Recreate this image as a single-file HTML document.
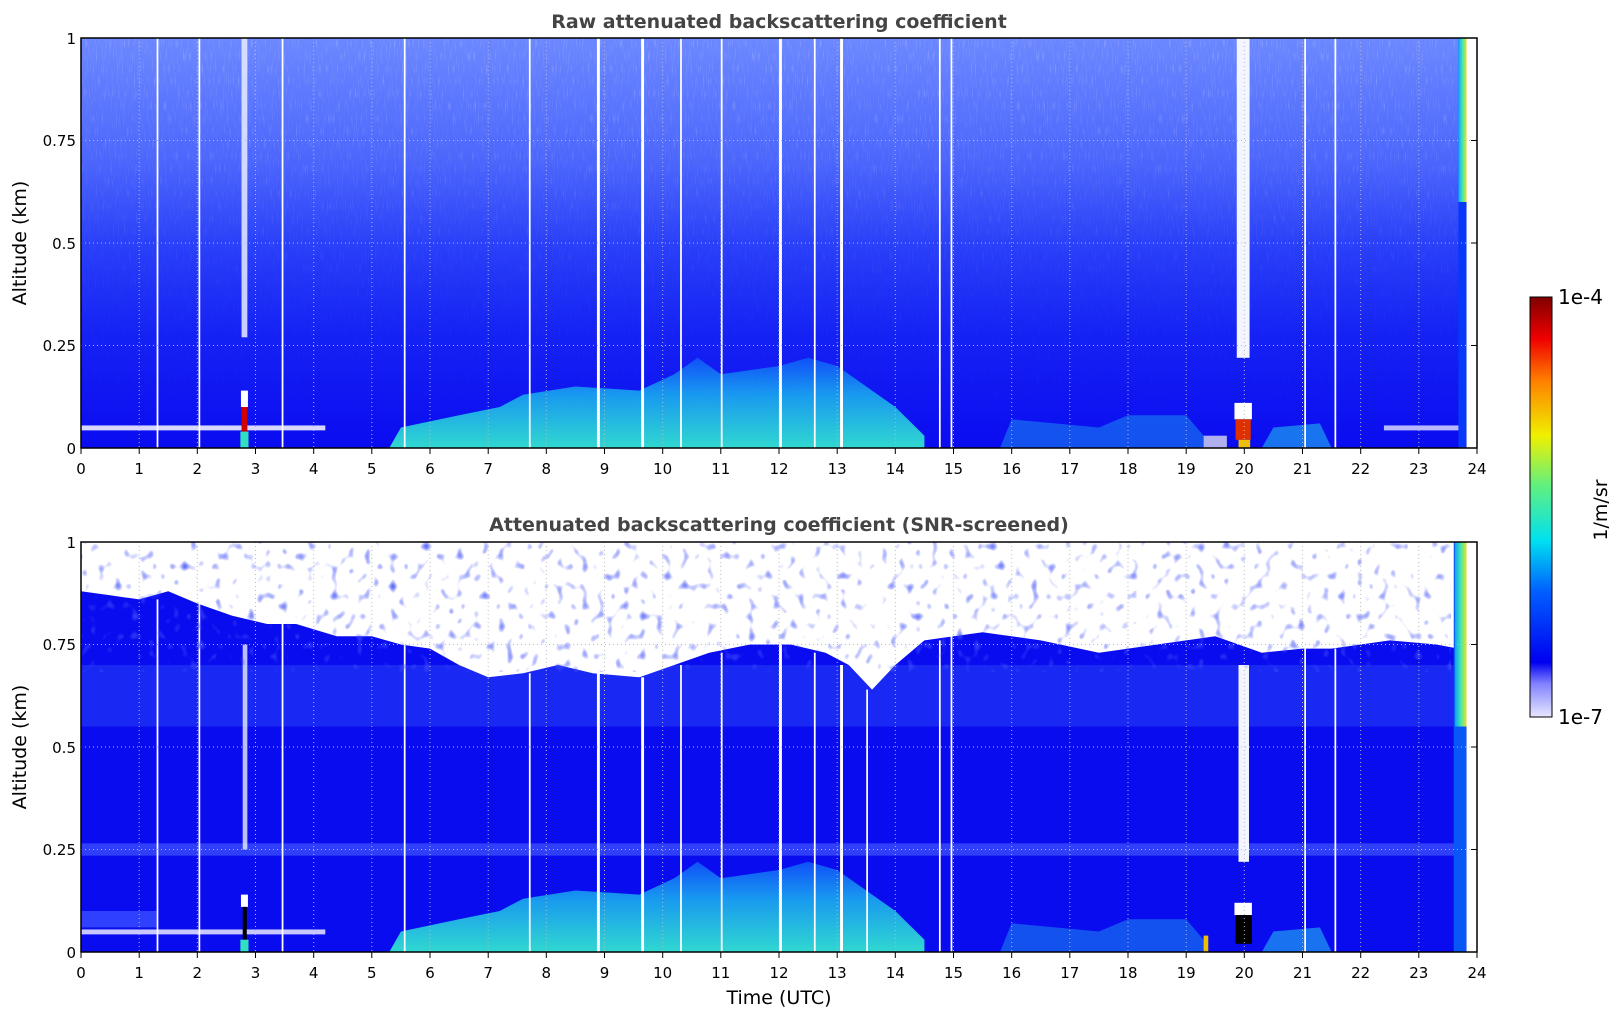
<!DOCTYPE html>
<html><head><meta charset="utf-8"><style>
body{margin:0;background:#fff;width:1621px;height:1020px;overflow:hidden;font-family:"DejaVu Sans","Liberation Sans",sans-serif;}
</style></head><body>
<svg width="1621" height="1020" xmlns="http://www.w3.org/2000/svg" font-family="DejaVu Sans, Liberation Sans, sans-serif">
<defs>
<linearGradient id="gTop" x1="0" y1="0" x2="0" y2="1">
<stop offset="0" stop-color="#6c88ff"/><stop offset="0.3" stop-color="#4c66fc"/><stop offset="0.5" stop-color="#2a40f8"/><stop offset="0.72" stop-color="#1522f4"/><stop offset="1" stop-color="#0a0cf0"/>
</linearGradient>
<linearGradient id="aer" x1="0" y1="0" x2="0" y2="1">
<stop offset="0" stop-color="#1050f8"/><stop offset="0.4" stop-color="#1898f0"/><stop offset="1" stop-color="#30d8d0"/>
</linearGradient>
<linearGradient id="strip" x1="0" y1="0" x2="1" y2="0">
<stop offset="0" stop-color="#10a0f8"/><stop offset="0.5" stop-color="#40e8b0"/><stop offset="1" stop-color="#f0e020"/>
</linearGradient>
<linearGradient id="cb" x1="0" y1="1" x2="0" y2="0">
<stop offset="0" stop-color="#e8e8ff"/><stop offset="0.08" stop-color="#8080ff"/><stop offset="0.13" stop-color="#0000f0"/><stop offset="0.3" stop-color="#0060ff"/><stop offset="0.42" stop-color="#00e0f0"/><stop offset="0.55" stop-color="#60f080"/><stop offset="0.67" stop-color="#f0f000"/><stop offset="0.8" stop-color="#ff8000"/><stop offset="0.9" stop-color="#f00000"/><stop offset="1" stop-color="#800000"/>
</linearGradient>
<filter id="nz" x="0" y="0" width="1" height="1"><feTurbulence type="fractalNoise" baseFrequency="0.9 0.08" numOctaves="1" seed="3"/><feColorMatrix type="matrix" values="0 0 0 0 1  0 0 0 0 1  0 0 0 0 1  0 0 0 1.6 -0.9"/></filter>
<filter id="nzb" x="0" y="0" width="1" height="1"><feTurbulence type="fractalNoise" baseFrequency="0.12 0.1" numOctaves="1" seed="7"/><feColorMatrix type="matrix" values="0 0 0 0 0.05  0 0 0 0 0.08  0 0 0 0 0.95  0 0 0 4 -2.4"/></filter>
<linearGradient id="fade" x1="0" y1="0" x2="0" y2="1"><stop offset="0" stop-color="#fff" stop-opacity="1"/><stop offset="0.6" stop-color="#fff" stop-opacity="0.2"/><stop offset="1" stop-color="#fff" stop-opacity="0"/></linearGradient>
<mask id="fm"><rect x="0" y="0" width="1396" height="410" fill="url(#fade)"/></mask>
</defs>

<text x="779" y="28" font-size="19" font-weight="bold" fill="#444" text-anchor="middle">Raw attenuated backscattering coefficient</text>
<text x="779" y="531" font-size="19" font-weight="bold" fill="#444" text-anchor="middle">Attenuated backscattering coefficient (SNR-screened)</text>

<!-- TOP PANEL -->
<g transform="translate(81,38)">
<svg width="1396" height="410" viewBox="0 0 24 1" preserveAspectRatio="none">
<rect x="0" y="0" width="24" height="1" fill="url(#gTop)"/>
<polygon fill="url(#aer)" points="5.3,1 5.5,0.95 6.5,0.92 7.2,0.9 7.6,0.87 8.5,0.85 9.6,0.86 10.2,0.82 10.6,0.78 11,0.82 12,0.8 12.5,0.78 13,0.8 13.5,0.85 14,0.9 14.5,0.97 14.5,1"/>
<polygon fill="#1870f0" opacity="0.7" points="15.8,1 16,0.93 17.5,0.95 18,0.92 19,0.92 19.3,0.97 19.3,1"/>
<polygon fill="#20a0f0" opacity="0.7" points="20.3,1 20.5,0.95 21.3,0.94 21.5,1"/>
<rect x="0" y="0.945" width="4.2" height="0.012" fill="#d8d8ff"/>
<rect x="22.4" y="0.945" width="1.3" height="0.012" fill="#b8b8ff"/>
<rect x="19.3" y="0.97" width="0.4" height="0.03" fill="#b0b0f0"/>
<rect x="2.76" y="0" width="0.1" height="0.73" fill="#e8ecff" opacity="0.85"/>
<rect x="2.75" y="0.86" width="0.12" height="0.04" fill="#fff"/>
<rect x="2.76" y="0.9" width="0.1" height="0.06" fill="#d00000"/>
<rect x="2.74" y="0.96" width="0.14" height="0.04" fill="#30e0c0"/>
<rect x="19.87" y="0" width="0.22" height="0.78" fill="#f4f6ff"/>
<rect x="19.83" y="0.89" width="0.3" height="0.04" fill="#fff"/>
<rect x="19.85" y="0.93" width="0.26" height="0.05" fill="#e03000"/>
<rect x="19.9" y="0.98" width="0.2" height="0.02" fill="#f0c000"/>
<rect x="23.68" y="0" width="0.14" height="1" fill="#0838f8"/>
<rect x="23.68" y="0" width="0.14" height="0.4" fill="url(#strip)"/>
<rect x="23.82" y="0" width="0.18" height="1" fill="#fff"/>
<g fill="#fff">
<rect x="1.3" y="0" width="0.03" height="1"/><rect x="2.02" y="0" width="0.03" height="1"/><rect x="3.45" y="0" width="0.03" height="1"/><rect x="5.55" y="0" width="0.03" height="1"/><rect x="7.7" y="0" width="0.03" height="1"/><rect x="8.87" y="0" width="0.05" height="1"/><rect x="9.63" y="0" width="0.05" height="1"/><rect x="10.3" y="0" width="0.03" height="1"/><rect x="11" y="0" width="0.03" height="1"/><rect x="12" y="0" width="0.05" height="1"/><rect x="12.6" y="0" width="0.03" height="1"/><rect x="13.05" y="0" width="0.05" height="1"/><rect x="14.75" y="0" width="0.03" height="1"/><rect x="14.95" y="0" width="0.03" height="1"/><rect x="21.03" y="0" width="0.03" height="1"/><rect x="21.55" y="0" width="0.03" height="1"/>
</g>
</svg>
<rect x="0" y="0" width="1375" height="410" filter="url(#nz)" mask="url(#fm)" opacity="0.55"/>
</g>

<!-- BOTTOM PANEL -->
<g transform="translate(81,542)">
<svg width="1396" height="410" viewBox="0 0 24 1" preserveAspectRatio="none">
<rect x="0" y="0" width="24" height="1" fill="#0a0cf0"/>
<rect x="0" y="0.3" width="23.7" height="0.15" fill="#1a28f4"/>
<rect x="0" y="0.735" width="23.7" height="0.03" fill="#3040f8"/>
<rect x="0" y="0.9" width="1.3" height="0.04" fill="#3040ff"/>
<polygon fill="#fff" points="0,0 23.68,0 23.68,0.26 23.3,0.25 22.5,0.24 21.5,0.26 21,0.26 20.3,0.27 19.5,0.23 18.5,0.25 17.5,0.27 16.5,0.24 15.5,0.22 14.5,0.24 14,0.3 13.6,0.36 13.2,0.3 12.8,0.27 12.2,0.25 11.5,0.25 10.8,0.27 10.2,0.3 9.6,0.33 8.8,0.32 8.2,0.3 7.6,0.32 7.0,0.33 6.5,0.3 6,0.26 5.5,0.25 5,0.23 4.4,0.23 3.7,0.2 3.2,0.2 2.6,0.18 2,0.15 1.5,0.12 1,0.14 0.5,0.13 0,0.12"/>
<polygon fill="url(#aer)" points="5.3,1 5.5,0.95 6.5,0.92 7.2,0.9 7.6,0.87 8.5,0.85 9.6,0.86 10.2,0.82 10.6,0.78 11,0.82 12,0.8 12.5,0.78 13,0.8 13.5,0.85 14,0.9 14.5,0.97 14.5,1"/>
<polygon fill="#1870f0" opacity="0.7" points="15.8,1 16,0.93 17.5,0.95 18,0.92 19,0.92 19.3,0.97 19.3,1"/>
<polygon fill="#20a0f0" opacity="0.7" points="20.3,1 20.5,0.95 21.3,0.94 21.5,1"/>
<rect x="0" y="0.945" width="4.2" height="0.012" fill="#c8c8ff"/>
<rect x="2.78" y="0.25" width="0.08" height="0.5" fill="#e8ecff" opacity="0.8"/>
<rect x="2.75" y="0.86" width="0.12" height="0.03" fill="#fff"/>
<rect x="2.78" y="0.89" width="0.07" height="0.08" fill="#000"/>
<rect x="2.74" y="0.97" width="0.14" height="0.03" fill="#30e0c0"/>
<rect x="19.9" y="0.3" width="0.18" height="0.48" fill="#f4f6ff"/>
<rect x="19.83" y="0.88" width="0.3" height="0.03" fill="#fff"/>
<rect x="19.85" y="0.91" width="0.28" height="0.07" fill="#000"/>
<rect x="19.3" y="0.96" width="0.08" height="0.04" fill="#f0c000"/>
<rect x="23.6" y="0" width="0.22" height="1" fill="#0858f8"/>
<rect x="23.62" y="0" width="0.2" height="0.45" fill="url(#strip)"/>
<rect x="23.82" y="0" width="0.18" height="1" fill="#fff"/>
<g fill="#fff">
<rect x="1.3" y="0.14" width="0.03" height="0.86"/><rect x="2.02" y="0.15" width="0.03" height="0.85"/><rect x="3.45" y="0.2" width="0.03" height="0.8"/><rect x="5.55" y="0.25" width="0.03" height="0.75"/><rect x="7.7" y="0.32" width="0.03" height="0.68"/><rect x="8.87" y="0.32" width="0.05" height="0.68"/><rect x="9.63" y="0.33" width="0.05" height="0.67"/><rect x="10.3" y="0.3" width="0.03" height="0.7"/><rect x="11" y="0.27" width="0.03" height="0.73"/><rect x="12" y="0.25" width="0.05" height="0.75"/><rect x="12.6" y="0.27" width="0.03" height="0.73"/><rect x="13.05" y="0.3" width="0.05" height="0.7"/><rect x="13.5" y="0.36" width="0.03" height="0.64"/><rect x="14.75" y="0.24" width="0.03" height="0.76"/><rect x="14.95" y="0.23" width="0.03" height="0.77"/><rect x="21.03" y="0.26" width="0.03" height="0.74"/><rect x="21.55" y="0.26" width="0.03" height="0.74"/>
</g>
</svg>
<rect x="0" y="0" width="1370" height="130" filter="url(#nzb)" opacity="0.85"/>
</g>

<g stroke="#bbb" stroke-width="1" stroke-dasharray="1,3">
<path d="M139.2,38V448M197.3,38V448M255.5,38V448M313.7,38V448M371.8,38V448M430,38V448M488.2,38V448M546.3,38V448M604.5,38V448M662.7,38V448M720.8,38V448M779,38V448M837.2,38V448M895.3,38V448M953.5,38V448M1011.7,38V448M1069.8,38V448M1128,38V448M1186.2,38V448M1244.3,38V448M1302.5,38V448M1360.7,38V448M1418.8,38V448"/>
<path d="M81,140.5H1477M81,243H1477M81,345.5H1477"/>
<path d="M139.2,542V952M197.3,542V952M255.5,542V952M313.7,542V952M371.8,542V952M430,542V952M488.2,542V952M546.3,542V952M604.5,542V952M662.7,542V952M720.8,542V952M779,542V952M837.2,542V952M895.3,542V952M953.5,542V952M1011.7,542V952M1069.8,542V952M1128,542V952M1186.2,542V952M1244.3,542V952M1302.5,542V952M1360.7,542V952M1418.8,542V952"/>
<path d="M81,644.5H1477M81,747H1477M81,849.5H1477"/>
</g>
<rect x="81" y="38" width="1396" height="410" fill="none" stroke="#000" stroke-width="1.5"/>
<rect x="81" y="542" width="1396" height="410" fill="none" stroke="#000" stroke-width="1.5"/>
<g stroke="#000" stroke-width="1">
<path d="M81,448v6M139.2,448v6M197.3,448v6M255.5,448v6M313.7,448v6M371.8,448v6M430,448v6M488.2,448v6M546.3,448v6M604.5,448v6M662.7,448v6M720.8,448v6M779,448v6M837.2,448v6M895.3,448v6M953.5,448v6M1011.7,448v6M1069.8,448v6M1128,448v6M1186.2,448v6M1244.3,448v6M1302.5,448v6M1360.7,448v6M1418.8,448v6M1477,448v6"/>
<path d="M81,952v6M139.2,952v6M197.3,952v6M255.5,952v6M313.7,952v6M371.8,952v6M430,952v6M488.2,952v6M546.3,952v6M604.5,952v6M662.7,952v6M720.8,952v6M779,952v6M837.2,952v6M895.3,952v6M953.5,952v6M1011.7,952v6M1069.8,952v6M1128,952v6M1186.2,952v6M1244.3,952v6M1302.5,952v6M1360.7,952v6M1418.8,952v6M1477,952v6"/>
<path d="M1471,140.5h6M1471,243h6M1471,345.5h6M1471,644.5h6M1471,747h6M1471,849.5h6"/>
</g>
<g font-size="15" fill="#000" text-anchor="middle">
<text x="81" y="474">0</text><text x="139.2" y="474">1</text><text x="197.3" y="474">2</text><text x="255.5" y="474">3</text><text x="313.7" y="474">4</text><text x="371.8" y="474">5</text><text x="430" y="474">6</text><text x="488.2" y="474">7</text><text x="546.3" y="474">8</text><text x="604.5" y="474">9</text><text x="662.7" y="474">10</text><text x="720.8" y="474">11</text><text x="779" y="474">12</text><text x="837.2" y="474">13</text><text x="895.3" y="474">14</text><text x="953.5" y="474">15</text><text x="1011.7" y="474">16</text><text x="1069.8" y="474">17</text><text x="1128" y="474">18</text><text x="1186.2" y="474">19</text><text x="1244.3" y="474">20</text><text x="1302.5" y="474">21</text><text x="1360.7" y="474">22</text><text x="1418.8" y="474">23</text><text x="1477" y="474">24</text>
<text x="81" y="978">0</text><text x="139.2" y="978">1</text><text x="197.3" y="978">2</text><text x="255.5" y="978">3</text><text x="313.7" y="978">4</text><text x="371.8" y="978">5</text><text x="430" y="978">6</text><text x="488.2" y="978">7</text><text x="546.3" y="978">8</text><text x="604.5" y="978">9</text><text x="662.7" y="978">10</text><text x="720.8" y="978">11</text><text x="779" y="978">12</text><text x="837.2" y="978">13</text><text x="895.3" y="978">14</text><text x="953.5" y="978">15</text><text x="1011.7" y="978">16</text><text x="1069.8" y="978">17</text><text x="1128" y="978">18</text><text x="1186.2" y="978">19</text><text x="1244.3" y="978">20</text><text x="1302.5" y="978">21</text><text x="1360.7" y="978">22</text><text x="1418.8" y="978">23</text><text x="1477" y="978">24</text>
</g>
<g font-size="15" fill="#000" text-anchor="end">
<text x="76" y="44">1</text><text x="76" y="146">0.75</text><text x="76" y="249">0.5</text><text x="76" y="351">0.25</text><text x="76" y="454">0</text>
<text x="76" y="548">1</text><text x="76" y="650">0.75</text><text x="76" y="753">0.5</text><text x="76" y="855">0.25</text><text x="76" y="958">0</text>
</g>
<text transform="translate(26,243) rotate(-90)" font-size="19" text-anchor="middle">Altitude (km)</text>
<text transform="translate(26,747) rotate(-90)" font-size="19" text-anchor="middle">Altitude (km)</text>
<text x="779" y="1004" font-size="19" text-anchor="middle">Time (UTC)</text>

<rect x="1530" y="297" width="22" height="420" fill="url(#cb)" stroke="#000" stroke-width="1"/>
<text x="1558" y="304" font-size="20">1e-4</text>
<text x="1558" y="724" font-size="20">1e-7</text>
<text transform="translate(1607,510) rotate(-90)" font-size="19" text-anchor="middle">1/m/sr</text>
</svg>
</body></html>
